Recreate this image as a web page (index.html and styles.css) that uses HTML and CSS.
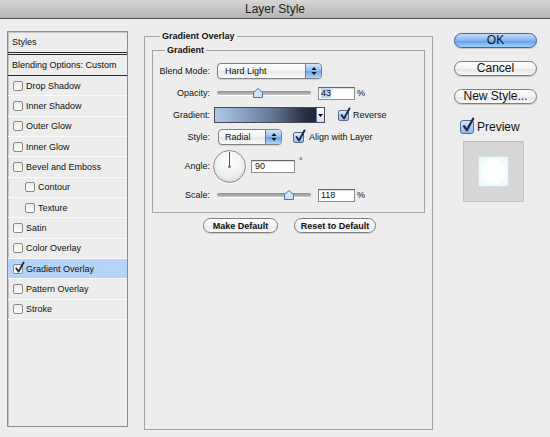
FILE: index.html
```html
<!DOCTYPE html>
<html lang="en">
<head>
    <meta charset="UTF-8">
    <meta name="viewport" content="width=device-width, initial-scale=1.0">
    <title>Layer Style</title>
    <link rel="stylesheet" href="styles.css">
</head>
<body>
    <div class="titlebar">Layer Style</div>

    <div class="dialog">
        <div class="styles-list">
            <div class="list-head">Styles</div>
            <div class="list-blend">Blending Options: Custom</div>
            <div class="list-item"><span class="check"></span>Drop Shadow</div>
            <div class="list-item"><span class="check"></span>Inner Shadow</div>
            <div class="list-item"><span class="check"></span>Outer Glow</div>
            <div class="list-item"><span class="check"></span>Inner Glow</div>
            <div class="list-item"><span class="check"></span>Bevel and Emboss</div>
            <div class="list-item sub"><span class="check"></span>Contour</div>
            <div class="list-item sub"><span class="check"></span>Texture</div>
            <div class="list-item"><span class="check"></span>Satin</div>
            <div class="list-item"><span class="check"></span>Color Overlay</div>
            <div class="list-item selected">
                <span class="check"><svg class="tick" width="11" height="13" viewBox="0 0 12 14"><path d="M2.5 8 L5 11.5 L10.5 1.5"/></svg></span>Gradient Overlay
            </div>
            <div class="list-item"><span class="check"></span>Pattern Overlay</div>
            <div class="list-item"><span class="check"></span>Stroke</div>
        </div>

        <fieldset class="panel">
            <legend>Gradient Overlay</legend>
            <fieldset class="group">
                <legend>Gradient</legend>

                <div class="row">
                    <span class="label">Blend Mode:</span>
                    <div class="select select-blend">
                        <span class="select-text">Hard Light</span>
                        <span class="stepper"><svg width="6" height="10" viewBox="0 0 6 10"><path d="M0.5 4 L3 1 L5.5 4 Z M0.5 6 L3 9 L5.5 6 Z"/></svg></span>
                    </div>
                </div>

                <div class="row">
                    <span class="label">Opacity:</span>
                    <div class="slider">
                        <div class="track"></div>
                        <svg class="thumb" style="left: 36px" width="10" height="10" viewBox="0 0 10 10"><path d="M5 0.5 L9.5 4.5 V9.5 H0.5 V4.5 Z"/></svg>
                    </div>
                    <div class="field field-pct"><span class="selected-text">43</span></div>
                    <span class="unit">%</span>
                </div>

                <div class="row">
                    <span class="label">Gradient:</span>
                    <div class="gradient-bar">
                        <span class="bar-arrow"><svg width="5" height="3" viewBox="0 0 5 3"><path d="M0 0 H5 L2.5 3 Z"/></svg></span>
                    </div>
                    <span class="check-blue check-reverse"><svg class="tick" width="12" height="14" viewBox="0 0 12 14"><path d="M2.5 8 L5 11.5 L10.5 1.5"/></svg></span>
                    <span class="check-label">Reverse</span>
                </div>

                <div class="row">
                    <span class="label">Style:</span>
                    <div class="select select-style">
                        <span class="select-text">Radial</span>
                        <span class="stepper"><svg width="6" height="10" viewBox="0 0 6 10"><path d="M0.5 4 L3 1 L5.5 4 Z M0.5 6 L3 9 L5.5 6 Z"/></svg></span>
                    </div>
                    <span class="check-blue check-align"><svg class="tick" width="12" height="14" viewBox="0 0 12 14"><path d="M2.5 8 L5 11.5 L10.5 1.5"/></svg></span>
                    <span class="check-label align-label">Align with Layer</span>
                </div>

                <div class="row tall">
                    <span class="label">Angle:</span>
                    <div class="dial"><span class="dial-hand"></span><span class="dial-pin"></span></div>
                    <div class="field field-angle">90</div>
                    <span class="deg">°</span>
                </div>

                <div class="row">
                    <span class="label">Scale:</span>
                    <div class="slider">
                        <div class="track"></div>
                        <svg class="thumb" style="left: 67px" width="10" height="10" viewBox="0 0 10 10"><path d="M5 0.5 L9.5 4.5 V9.5 H0.5 V4.5 Z"/></svg>
                    </div>
                    <div class="field field-pct">118</div>
                    <span class="unit">%</span>
                </div>
            </fieldset>

            <div class="defaults">
                <button type="button" class="pill pill-make">Make Default</button>
                <button type="button" class="pill pill-reset">Reset to Default</button>
            </div>
        </fieldset>

        <div class="actions">
            <button type="button" class="btn btn-primary">OK</button>
            <button type="button" class="btn">Cancel</button>
            <button type="button" class="btn">New Style...</button>

            <div class="preview-toggle">
                <span class="check-blue check-big"><svg class="tick" width="14" height="16" viewBox="0 0 12 14"><path d="M2.5 8 L5 11.5 L10.5 1.5"/></svg></span>
                <span>Preview</span>
            </div>
            <div class="preview">
                <div class="preview-swatch"></div>
            </div>
        </div>
    </div>
</body>
</html>
```

FILE: styles.css
```css
body {
    margin: 0;
    width: 550px;
    height: 437px;
    overflow: hidden;
    background-color: #ededed;
    font-family: "Liberation Sans", Arial, sans-serif;
    font-size: 9px;
    color: #111;
}

.titlebar {
    height: 18px;
    line-height: 19px;
    text-align: center;
    font-size: 12px;
    color: #1e1e1e;
    background: linear-gradient(#d6d6d6, #b6b6b6);
    border-bottom: 1px solid #555;
}

.dialog {
    display: flex;
    align-items: flex-start;
    padding: 12px 0 0 7px;
}

/* left: list of effects */
.styles-list {
    width: 121px;
    height: 396px;
    box-sizing: border-box;
    border: 1px solid #8c8c8c;
    box-shadow: inset 1px 1px 0 #c4c4c4;
    flex: none;
}

.list-head,
.list-blend {
    height: 20px;
    line-height: 21px;
    padding-left: 4px;
    color: #0c0c0c;
}

.list-head {
    border-bottom: 3px double #2a2a2a;
}

.list-blend {
    border-bottom: 1px solid #2a2a2a;
}

.list-item {
    display: flex;
    align-items: center;
    height: 20.35px;
    box-sizing: border-box;
    padding-left: 5px;
    border-bottom: 1px solid #fafafa;
}

.list-item.sub {
    padding-left: 17px;
}

.list-item.selected {
    background-color: #b5d4fc;
}

.check {
    position: relative;
    flex: none;
    width: 10px;
    height: 10px;
    margin-right: 3px;
    box-sizing: border-box;
    border: 1px solid #8a8a8a;
    border-radius: 2px;
    background: linear-gradient(#ececec, #ffffff);
}

.tick {
    position: absolute;
    left: 0;
    top: -4px;
    overflow: visible;
}

.tick path {
    fill: none;
    stroke: #1c2b4c;
    stroke-width: 2;
    stroke-linecap: round;
    stroke-linejoin: round;
}

/* middle: settings */
.panel {
    margin: 0 0 0 16px;
    width: 289px;
    height: 399px;
    box-sizing: border-box;
    padding: 3px 7px 0;
    border: 1px solid #a3a3a3;
    min-inline-size: 0;
    flex: none;
}

.panel > legend,
.group > legend {
    font-weight: bold;
    line-height: 11px;
    padding: 0 2px;
}

.panel > legend {
    margin-left: 8px;
}

.group {
    margin: 0;
    padding: 4px 0 6px;
    border: 1px solid #a3a3a3;
    min-inline-size: 0;
}

.group > legend {
    margin-left: 12px;
}

.row {
    display: flex;
    align-items: center;
    height: 22px;
}

.row.tall {
    height: 36px;
}

.label {
    flex: none;
    width: 57px;
    text-align: right;
}

.select {
    display: flex;
    align-items: stretch;
    height: 16px;
    box-sizing: border-box;
    border: 1px solid #7b7f88;
    border-radius: 4px;
    background: linear-gradient(#ffffff, #f3f3f3 50%, #e8e8e8 51%, #fbfbfb);
    overflow: hidden;
    box-shadow: 0 1px 1px rgba(0, 0, 0, 0.12);
}

.select-blend {
    width: 105px;
    margin-left: 7px;
}

.select-style {
    width: 64px;
    margin-left: 8px;
}

.select-text {
    flex: 1;
    line-height: 14px;
    padding-left: 7px;
}

.select-style .select-text {
    padding-left: 6px;
}

.stepper {
    display: flex;
    align-items: center;
    justify-content: center;
    width: 15px;
    border-left: 1px solid #5d7db4;
    background: linear-gradient(#d2e4fa, #90baef 50%, #6aa2ea 51%, #aed5fb);
}

.stepper path,
.bar-arrow path {
    fill: #111;
}

.slider {
    position: relative;
    width: 94px;
    height: 13px;
    margin-left: 7px;
}

.track {
    position: absolute;
    left: 0;
    right: 0;
    top: 4px;
    height: 4px;
    border-radius: 3px;
    background: linear-gradient(#8e8e8e, #c6c6c6);
    box-shadow: 0 1px 0 #fff;
}

.thumb {
    position: absolute;
    top: 1px;
}

.thumb path {
    fill: #d3e3f6;
    stroke: #4c70ad;
    stroke-width: 1;
}

.field {
    height: 13px;
    box-sizing: border-box;
    margin-left: 7px;
    padding-left: 2px;
    line-height: 11px;
    background-color: #fff;
    border: 1px solid #8c8c8c;
    border-top-color: #666;
    box-shadow: inset 0 1px 1px rgba(0, 0, 0, 0.15);
}

.field-pct {
    width: 37px;
}

.field-angle {
    width: 44px;
    margin-left: 5px;
    padding-left: 3px;
}

.selected-text {
    background-color: #b5d5ff;
}

.unit {
    margin-left: 2px;
}

.gradient-bar {
    display: flex;
    justify-content: flex-end;
    width: 111px;
    height: 16px;
    margin-left: 4px;
    box-sizing: border-box;
    border: 1px solid #454a55;
    background: linear-gradient(to right, #aec8e8, #8aa3c6 25%, #617290 55%, #2e3447 80%, #191c29);
}

.bar-arrow {
    display: flex;
    align-items: center;
    justify-content: center;
    width: 7px;
    border-left: 1px solid #6077b0;
    background: linear-gradient(#ffffff, #d9dde6);
}

.check-blue {
    position: relative;
    flex: none;
    width: 11px;
    height: 11px;
    box-sizing: border-box;
    border: 1px solid #5a6b8a;
    border-radius: 2px;
    background: linear-gradient(#dce9fb, #9cbfec);
}

.check-reverse {
    margin-left: 13px;
}

.check-align {
    margin-left: 11px;
}

.check-label {
    margin-left: 4px;
}

.align-label {
    margin-left: 5px;
}

.dial {
    position: relative;
    flex: none;
    width: 33px;
    height: 33px;
    margin-left: 3px;
    box-sizing: border-box;
    border: 1px solid #8e8e8e;
    border-radius: 50%;
    background: radial-gradient(circle at 50% 35%, #ffffff, #f0f0f0 55%, #d2d2d2);
    box-shadow: 0 1px 0 #ffffff, inset 0 -1px 2px rgba(0, 0, 0, 0.1);
}

.dial-hand {
    position: absolute;
    left: 15px;
    top: 1px;
    width: 1px;
    height: 15px;
    background-color: #555;
}

.dial-pin {
    position: absolute;
    left: 14px;
    top: 14px;
    width: 3px;
    height: 3px;
    border-radius: 50%;
    background-color: #777;
}

.deg {
    align-self: flex-start;
    margin: 9px 0 0 4px;
    line-height: 9px;
}

.defaults {
    display: flex;
    justify-content: center;
    gap: 16px;
    margin-top: 5px;
    padding-left: 2px;
}

.pill {
    height: 15px;
    padding: 0;
    box-sizing: border-box;
    font: bold 9px "Liberation Sans", Arial, sans-serif;
    color: #111;
    border: 1px solid #7f7f7f;
    border-radius: 8px;
    background: linear-gradient(#ffffff, #f4f4f4 50%, #e6e6e6 51%, #fdfdfd);
    box-shadow: 0 1px 1px rgba(0, 0, 0, 0.15);
}

.pill-make {
    width: 75px;
}

.pill-reset {
    width: 82px;
}

/* right: buttons and preview */
.actions {
    display: flex;
    flex-direction: column;
    margin-left: 21px;
    padding-top: 2px;
}

.btn {
    width: 83px;
    height: 15px;
    margin-bottom: 13px;
    padding: 0;
    box-sizing: border-box;
    font: 12px "Liberation Sans", Arial, sans-serif;
    line-height: 13px;
    color: #111;
    border: 1px solid #7c7c7c;
    border-radius: 8px;
    background: linear-gradient(#ffffff, #f3f3f3 50%, #e3e3e3 51%, #fafafa);
    box-shadow: 0 1px 1px rgba(0, 0, 0, 0.18);
}

.btn-primary {
    border-color: #3f62a3;
    background: linear-gradient(#c4dcf9, #85b4ef 50%, #5e9ce9 51%, #9fd0fc);
}

.preview-toggle {
    display: flex;
    align-items: center;
    gap: 3px;
    margin: 3px 0 0 6px;
    font-size: 12px;
    line-height: 14px;
}

.check-big {
    width: 14px;
    height: 14px;
    border-radius: 3px;
    background: linear-gradient(#d3e5fb, #8fb8ec);
}

.check-big .tick {
    top: -4px;
}

.preview {
    display: flex;
    align-items: center;
    justify-content: center;
    width: 61px;
    height: 61px;
    margin: 7px 0 0 9px;
    box-sizing: border-box;
    background-color: #d6d6d6;
    border: 1px solid #c4c4c4;
    border-top-color: #bababa;
}

.preview-swatch {
    width: 29px;
    height: 29px;
    background: radial-gradient(#ffffff 45%, #e2f5fc);
    box-shadow: 0 0 2px #d6f0fa;
}
```
